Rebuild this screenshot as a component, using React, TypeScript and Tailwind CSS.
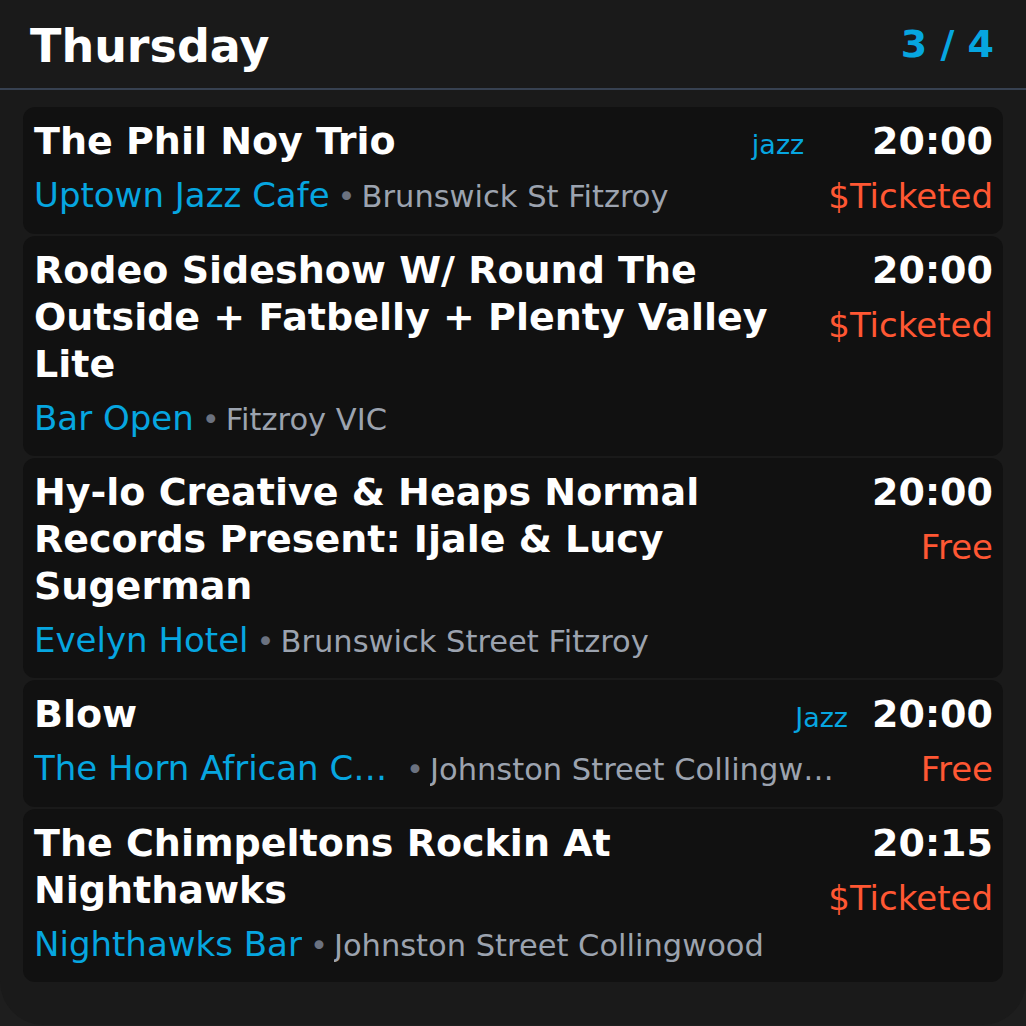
type Gig = {
  title: string;
  venue: string;
  address: string;
  time: string;
  price: string;
  genre?: string;
};

const gigs: Gig[] = [
  {
    title: 'The Phil Noy Trio',
    venue: 'Uptown Jazz Cafe',
    address: 'Brunswick St Fitzroy',
    time: '20:00',
    price: '$Ticketed',
    genre: 'jazz',
  },
  {
    title: 'Rodeo Sideshow W/ Round The Outside + Fatbelly + Plenty Valley Lite',
    venue: 'Bar Open',
    address: 'Fitzroy VIC',
    time: '20:00',
    price: '$Ticketed',
  },
  {
    title: 'Hy-lo Creative & Heaps Normal Records Present: Ijale & Lucy Sugerman',
    venue: 'Evelyn Hotel',
    address: 'Brunswick Street Fitzroy',
    time: '20:00',
    price: 'Free',
  },
  {
    title: 'Blow',
    venue: 'The Horn African Cafe',
    address: 'Johnston Street Collingwood',
    time: '20:00',
    price: 'Free',
    genre: 'Jazz',
  },
  {
    title: 'The Chimpeltons Rockin At Nighthawks',
    venue: 'Nighthawks Bar',
    address: 'Johnston Street Collingwood',
    time: '20:15',
    price: '$Ticketed',
  },
];

function GigCard({ gig }: { gig: Gig }) {
  return (
    <div className="flex gap-6 rounded-xl bg-[#111111] pl-[11px] pr-[10px] pt-[11px] pb-[17px]">
      <div className="flex min-w-0 flex-1 flex-col">
        <div className="flex items-baseline gap-4">
          <h3 className="min-w-0 flex-1 text-[38px] font-bold leading-[47px] text-white">{gig.title}</h3>
          {gig.genre && <span className="shrink-0 text-[27px] leading-none text-[#06a6e0]">{gig.genre}</span>}
        </div>
        <div className="mt-[9px] flex min-w-0 items-baseline whitespace-nowrap">
          <span className="max-w-[364px] shrink-0 truncate text-[34px] leading-[42px] text-[#06a6e0]">{gig.venue}</span>
          <span className="ml-2 mr-1.5 text-[30.5px] leading-[38px] text-[#6b7280]">•</span>
          <span className="min-w-0 truncate text-[30.5px] leading-[38px] text-[#9ca3af]">{gig.address}</span>
        </div>
      </div>
      <div className="flex shrink-0 flex-col items-end">
        <span className="text-[38px] font-bold leading-[47px] text-white">{gig.time}</span>
        <span className="mt-2.5 text-[34px] leading-[42px] text-[#ff5733]">{gig.price}</span>
      </div>
    </div>
  );
}

export default function App() {
  return (
    <div className="min-h-screen bg-[#1e1e1e] font-['DejaVu_Sans',sans-serif]">
      <div className="rounded-b-[44px] bg-[#1a1a1a]">
        <header className="flex items-center justify-between border-b-2 border-[#374151] pl-[30px] pr-[32px] pt-5 pb-4">
          <h1 className="text-[46px] font-bold leading-[52px] text-white">Thursday</h1>
          <span className="mb-1 text-[38px] font-bold leading-[44px] text-[#06a6e0]">3 / 4</span>
        </header>
        <div className="flex flex-col gap-0.5 px-[23px] pt-[17px] pb-[43px]">
          {gigs.map((gig) => (
            <GigCard key={gig.title} gig={gig} />
          ))}
        </div>
      </div>
    </div>
  );
}
